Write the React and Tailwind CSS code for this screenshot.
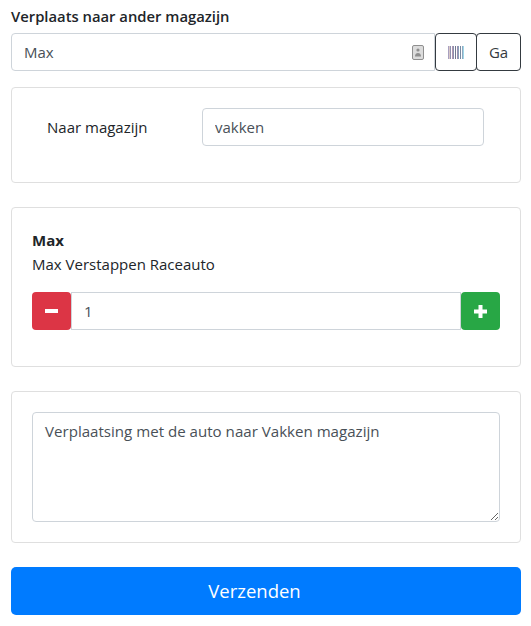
import React from 'react';

const Barcode = () => (
  <svg width="17" height="13" viewBox="0 0 17 13" shapeRendering="crispEdges">
    {[
      [0, '#a8a0c0'], [1, '#d8c8c8'], [2, '#9090b0'], [4, '#b098b0'], [5, '#8a90b0'], [7, '#70788f'],
      [9, '#9a90b0'], [10, '#88a0b8'], [12, '#7888a0'], [14, '#90a8c0'], [15, '#a0d8e8'],
    ].map(([x, c]) => (
      <rect key={x} x={x} y="0" width="1" height="13" fill={c} />
    ))}
  </svg>
);

const ContactIcon = () => (
  <svg width="12" height="15" viewBox="0 0 12 15">
    <rect x="0.5" y="0.5" width="11" height="14" rx="1.5" fill="#dcdcdc" stroke="#8f8f8f" />
    <circle cx="6" cy="5" r="1.6" fill="#8f8f8f" />
    <path d="M3 11.5c0-2.4 1-3.6 3-3.6s3 1.2 3 3.6z" fill="#8f8f8f" />
  </svg>
);

export default function App() {
  return (
    <div className="min-h-screen bg-white pr-[10px] pl-[11px] font-['Open_Sans',sans-serif] text-[15px] text-[#212529]">
      <label className="block pt-[5px] pb-[6px] text-[14.800px] leading-[22px] font-semibold">Verplaats naar ander magazijn</label>
      <div className="flex h-[38px]">
        <div className="relative flex-1">
          <input
            defaultValue="Max"
            className="h-full w-full rounded-l-[4px] border border-[#ced4da] bg-white px-3 text-[#495057] outline-none"
          />
          <span className="absolute top-[12px] right-[11px] flex">
            <ContactIcon />
          </span>
        </div>
        <button className="-mr-px flex w-[42px] items-center justify-center rounded-[4px] border border-[#343a40]">
          <Barcode />
        </button>
        <button className="w-[45px] rounded-[4px] border border-[#343a40] text-[15px] text-[#343a40]">Ga</button>
      </div>

      <div className="mt-4 flex h-[96px] items-start rounded-[4px] border border-[#dfdfdf] pt-5 pr-9 pl-[35px]">
        <label className="w-[155px] leading-[38px]">Naar magazijn</label>
        <input
          defaultValue="vakken"
          className="h-[38px] flex-1 rounded-[4px] border border-[#ced4da] px-3 text-[#495057] outline-none"
        />
      </div>

      <div className="mt-6 h-[160px] rounded-[4px] border border-[#dfdfdf] px-5 pt-5">
        <div className="leading-6 font-bold">Max</div>
        <div className="leading-6">Max Verstappen Raceauto</div>
        <div className="mt-4 flex h-[38px]">
          <button className="flex w-[39px] items-center justify-center rounded-[4px] bg-[#dc3545]">
            <span className="h-[4px] w-[13px] bg-white"></span>
          </button>
          <input
            defaultValue="1"
            className="min-w-0 flex-1 border border-[#ced4da] px-3 text-[#495057] outline-none"
          />
          <button className="flex w-[39px] items-center justify-center rounded-[4px] bg-[#28a745]">
            <svg width="13" height="13" viewBox="0 0 13 13">
              <path d="M4.5 0h4v4.5H13v4H8.500V13h-4V8.500H0v-4h4.500z" fill="#fff" />
            </svg>
          </button>
        </div>
      </div>

      <div className="mt-6 h-[152px] rounded-[4px] border border-[#dfdfdf] px-5 pt-5">
        <textarea
          defaultValue="Verplaatsing met de auto naar Vakken magazijn"
          className="block h-[110px] w-full rounded-[4px] border border-[#ced4da] px-3 py-[6px] text-[15.100px] leading-6 text-[#495057] outline-none"
        />
      </div>

      <button className="mt-6 h-[48px] w-full rounded-[5px] bg-[#007bff] pr-[23px] text-[18.500px] text-white">Verzenden</button>
    </div>
  );
}
